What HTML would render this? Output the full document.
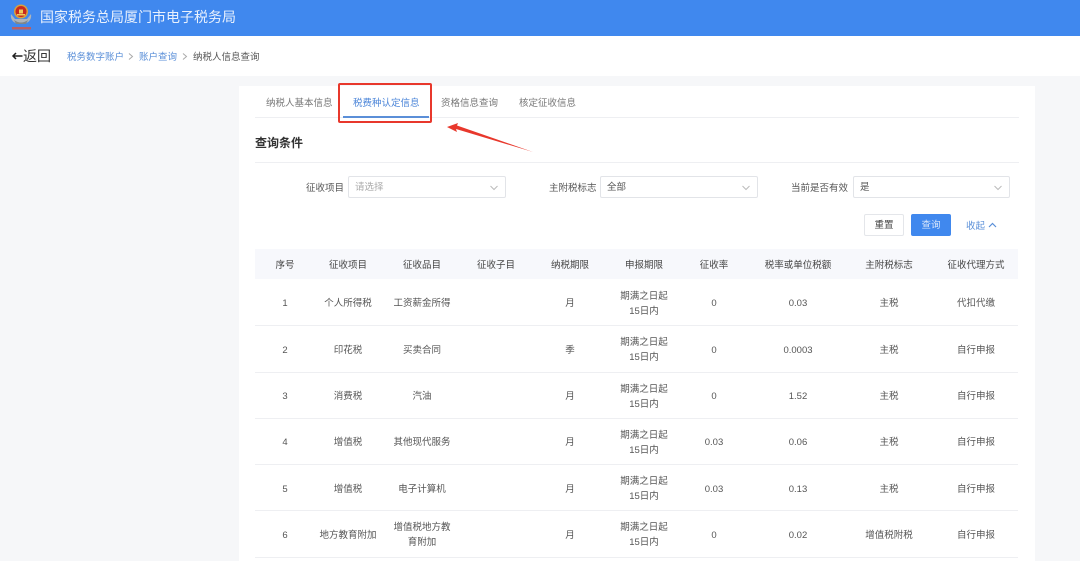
<!DOCTYPE html>
<html lang="zh-CN">
<head>
<meta charset="utf-8">
<title>税费种认定信息</title>
<style>
html,body{margin:0;padding:0;background:#f6f7f9;}
body{width:1080px;height:561px;overflow:hidden;position:relative;font-family:"Liberation Sans","Noto Sans CJK SC",sans-serif;color:#555;font-size:9.500px;}
.a{position:absolute;white-space:nowrap;}
.c{position:absolute;transform:translateX(-50%);text-align:center;white-space:nowrap;line-height:15px;margin-top:1px;}
.hd{position:absolute;left:0;top:0;width:1080px;height:36px;background:#4088ee;}
.nav{position:absolute;left:0;top:36px;width:1080px;height:40px;background:#fff;}
.card{position:absolute;left:239px;top:86px;width:796px;height:475px;background:#fff;}
.line{position:absolute;height:1px;background:#eeeff2;left:255px;width:764px;}
.sel{position:absolute;top:176px;height:20px;background:#fff;border:1px solid #e2e4e8;border-radius:2px;line-height:22px;padding-left:6px;box-sizing:content-box;}
.sel svg{position:absolute;right:7px;top:8px;}
.th{color:#444;}
</style>
</head>
<body>
<div class="hd"></div>
<svg class="a" style="left:9px;top:3px" width="24" height="28" viewBox="0 0 24 28">
<path d="M2 11 C1 17 5 21 12 21 C19 21 23 17 22 11 L18 16 H6 Z" fill="#aeb4ba"/>
<path d="M5 17 Q12 22 19 17 L17 21 H7 Z" fill="#7f868c"/>
<circle cx="12" cy="8.500" r="7" fill="#d9a13c"/>
<circle cx="12" cy="8.500" r="5.500" fill="#c8281e"/>
<path d="M8 11 H16 V12.500 H8 Z M10 6.500 H14 V10.500 H10 Z" fill="#f0c95a"/>
<rect x="3" y="24" width="19" height="2.500" fill="#d9553f" opacity=".8"/>
</svg>
<div class="a" style="left:40px;top:9px;font-size:14px;line-height:17px;color:#e9f1fd;">国家税务总局厦门市电子税务局</div>
<div class="nav"></div>
<svg class="a" style="left:11px;top:51px" width="12" height="10" viewBox="0 0 12 10"><path d="M11.500 5H2M5 2 2 5 5 8" fill="none" stroke="#222" stroke-width="1.500"/></svg>
<div class="a" style="left:23px;top:47px;font-size:14px;line-height:18px;color:#333;">返回</div>
<div class="a" style="left:67px;top:51px;line-height:14px;color:#5a8fd8;">税务数字账户</div>
<svg class="a" style="left:128px;top:53px" width="6" height="7" viewBox="0 0 6 7"><path d="M1 .5 4.500 3.500 1 6.500" fill="none" stroke="#aaa"/></svg>
<div class="a" style="left:139px;top:51px;line-height:14px;color:#5a8fd8;">账户查询</div>
<svg class="a" style="left:182px;top:53px" width="6" height="7" viewBox="0 0 6 7"><path d="M1 .5 4.500 3.500 1 6.500" fill="none" stroke="#aaa"/></svg>
<div class="a" style="left:193px;top:51px;line-height:14px;color:#555;">纳税人信息查询</div>

<div class="card"></div>
<div class="a" style="left:266px;top:97px;line-height:14px;color:#777;">纳税人基本信息</div>
<div class="a" style="left:353px;top:97px;line-height:14px;color:#4a84d8;">税费种认定信息</div>
<div class="a" style="left:441px;top:97px;line-height:14px;color:#777;">资格信息查询</div>
<div class="a" style="left:519px;top:97px;line-height:14px;color:#777;">核定征收信息</div>
<div class="line" style="top:117px;"></div>
<div class="a" style="left:343px;top:116px;width:86px;height:2px;background:#5b8fd8;"></div>
<div class="a" style="left:338px;top:83px;width:94px;height:40px;box-sizing:border-box;border:2px solid #e8382c;border-radius:2px;"></div>
<svg class="a" style="left:440px;top:118px" width="100" height="40" viewBox="0 0 100 40">
<path d="M7 9 L18 5 L17 7.500 L93 34 L16 11 L17 14 Z" fill="#e8382c"/>
</svg>
<div class="a" style="left:255px;top:134px;font-size:12px;line-height:18px;font-weight:bold;color:#333;">查询条件</div>
<div class="line" style="top:162px;"></div>

<div class="a" style="left:306px;top:182px;line-height:14px;color:#555;">征收项目</div>
<div class="sel" style="left:348px;width:150px;color:#aaa;">请选择<svg width="8" height="6" viewBox="0 0 8 6"><path d="M.5 1 4 4.500 7.500 1" fill="none" stroke="#bbb"/></svg></div>
<div class="a" style="left:549px;top:182px;line-height:14px;color:#555;">主附税标志</div>
<div class="sel" style="left:600px;width:150px;color:#555;">全部<svg width="8" height="6" viewBox="0 0 8 6"><path d="M.5 1 4 4.500 7.500 1" fill="none" stroke="#bbb"/></svg></div>
<div class="a" style="left:791px;top:182px;line-height:14px;color:#555;">当前是否有效</div>
<div class="sel" style="left:853px;width:149px;color:#555;">是<svg width="8" height="6" viewBox="0 0 8 6"><path d="M.5 1 4 4.500 7.500 1" fill="none" stroke="#bbb"/></svg></div>

<div class="a" style="left:864px;top:214px;width:40px;height:22px;box-sizing:border-box;border:1px solid #e4e6ea;border-radius:2px;background:#fff;text-align:center;line-height:22px;color:#444;">重置</div>
<div class="a" style="left:911px;top:214px;width:40px;height:22px;border-radius:2px;background:#4088ee;text-align:center;line-height:24px;color:#dbe8fb;">查询</div>
<div class="a" style="left:966px;top:220px;line-height:14px;color:#5a8fd8;">收起</div>
<svg class="a" style="left:988px;top:222px" width="9" height="6" viewBox="0 0 9 6"><path d="M1 5 4.500 1.500 8 5" fill="none" stroke="#5a8fd8" stroke-width="1.200"/></svg>

<div class="a" style="left:255px;top:249px;width:763px;height:30px;background:#f7f8fc;"></div>
<div class="c th" style="left:285px;top:257px;">序号</div>
<div class="c th" style="left:348px;top:257px;">征收项目</div>
<div class="c th" style="left:422px;top:257px;">征收品目</div>
<div class="c th" style="left:496px;top:257px;">征收子目</div>
<div class="c th" style="left:570px;top:257px;">纳税期限</div>
<div class="c th" style="left:644px;top:257px;">申报期限</div>
<div class="c th" style="left:714px;top:257px;">征收率</div>
<div class="c th" style="left:798px;top:257px;">税率或单位税额</div>
<div class="c th" style="left:889px;top:257px;">主附税标志</div>
<div class="c th" style="left:976px;top:257px;">征收代理方式</div>

<!-- row 1 -->
<div class="c" style="left:285px;top:295px;">1</div>
<div class="c" style="left:348px;top:295px;">个人所得税</div>
<div class="c" style="left:422px;top:295px;">工资薪金所得</div>
<div class="c" style="left:570px;top:295px;">月</div>
<div class="c" style="left:644px;top:288px;">期满之日起<br>15日内</div>
<div class="c" style="left:714px;top:295px;">0</div>
<div class="c" style="left:798px;top:295px;">0.03</div>
<div class="c" style="left:889px;top:295px;">主税</div>
<div class="c" style="left:976px;top:295px;">代扣代缴</div>
<div class="line" style="top:325px;width:763px;"></div>
<!-- row 2 -->
<div class="c" style="left:285px;top:342px;">2</div>
<div class="c" style="left:348px;top:342px;">印花税</div>
<div class="c" style="left:422px;top:342px;">买卖合同</div>
<div class="c" style="left:570px;top:342px;">季</div>
<div class="c" style="left:644px;top:334px;">期满之日起<br>15日内</div>
<div class="c" style="left:714px;top:342px;">0</div>
<div class="c" style="left:798px;top:342px;">0.0003</div>
<div class="c" style="left:889px;top:342px;">主税</div>
<div class="c" style="left:976px;top:342px;">自行申报</div>
<div class="line" style="top:372px;width:763px;"></div>
<!-- row 3 -->
<div class="c" style="left:285px;top:388px;">3</div>
<div class="c" style="left:348px;top:388px;">消费税</div>
<div class="c" style="left:422px;top:388px;">汽油</div>
<div class="c" style="left:570px;top:388px;">月</div>
<div class="c" style="left:644px;top:381px;">期满之日起<br>15日内</div>
<div class="c" style="left:714px;top:388px;">0</div>
<div class="c" style="left:798px;top:388px;">1.52</div>
<div class="c" style="left:889px;top:388px;">主税</div>
<div class="c" style="left:976px;top:388px;">自行申报</div>
<div class="line" style="top:418px;width:763px;"></div>
<!-- row 4 -->
<div class="c" style="left:285px;top:434px;">4</div>
<div class="c" style="left:348px;top:434px;">增值税</div>
<div class="c" style="left:422px;top:434px;">其他现代服务</div>
<div class="c" style="left:570px;top:434px;">月</div>
<div class="c" style="left:644px;top:427px;">期满之日起<br>15日内</div>
<div class="c" style="left:714px;top:434px;">0.03</div>
<div class="c" style="left:798px;top:434px;">0.06</div>
<div class="c" style="left:889px;top:434px;">主税</div>
<div class="c" style="left:976px;top:434px;">自行申报</div>
<div class="line" style="top:464px;width:763px;"></div>
<!-- row 5 -->
<div class="c" style="left:285px;top:481px;">5</div>
<div class="c" style="left:348px;top:481px;">增值税</div>
<div class="c" style="left:422px;top:481px;">电子计算机</div>
<div class="c" style="left:570px;top:481px;">月</div>
<div class="c" style="left:644px;top:473px;">期满之日起<br>15日内</div>
<div class="c" style="left:714px;top:481px;">0.03</div>
<div class="c" style="left:798px;top:481px;">0.13</div>
<div class="c" style="left:889px;top:481px;">主税</div>
<div class="c" style="left:976px;top:481px;">自行申报</div>
<div class="line" style="top:510px;width:763px;"></div>
<!-- row 6 -->
<div class="c" style="left:285px;top:527px;">6</div>
<div class="c" style="left:348px;top:527px;">地方教育附加</div>
<div class="c" style="left:422px;top:519px;">增值税地方教<br>育附加</div>
<div class="c" style="left:570px;top:527px;">月</div>
<div class="c" style="left:644px;top:519px;">期满之日起<br>15日内</div>
<div class="c" style="left:714px;top:527px;">0</div>
<div class="c" style="left:798px;top:527px;">0.02</div>
<div class="c" style="left:889px;top:527px;">增值税附税</div>
<div class="c" style="left:976px;top:527px;">自行申报</div>
<div class="line" style="top:557px;width:763px;"></div>
</body>
</html>
